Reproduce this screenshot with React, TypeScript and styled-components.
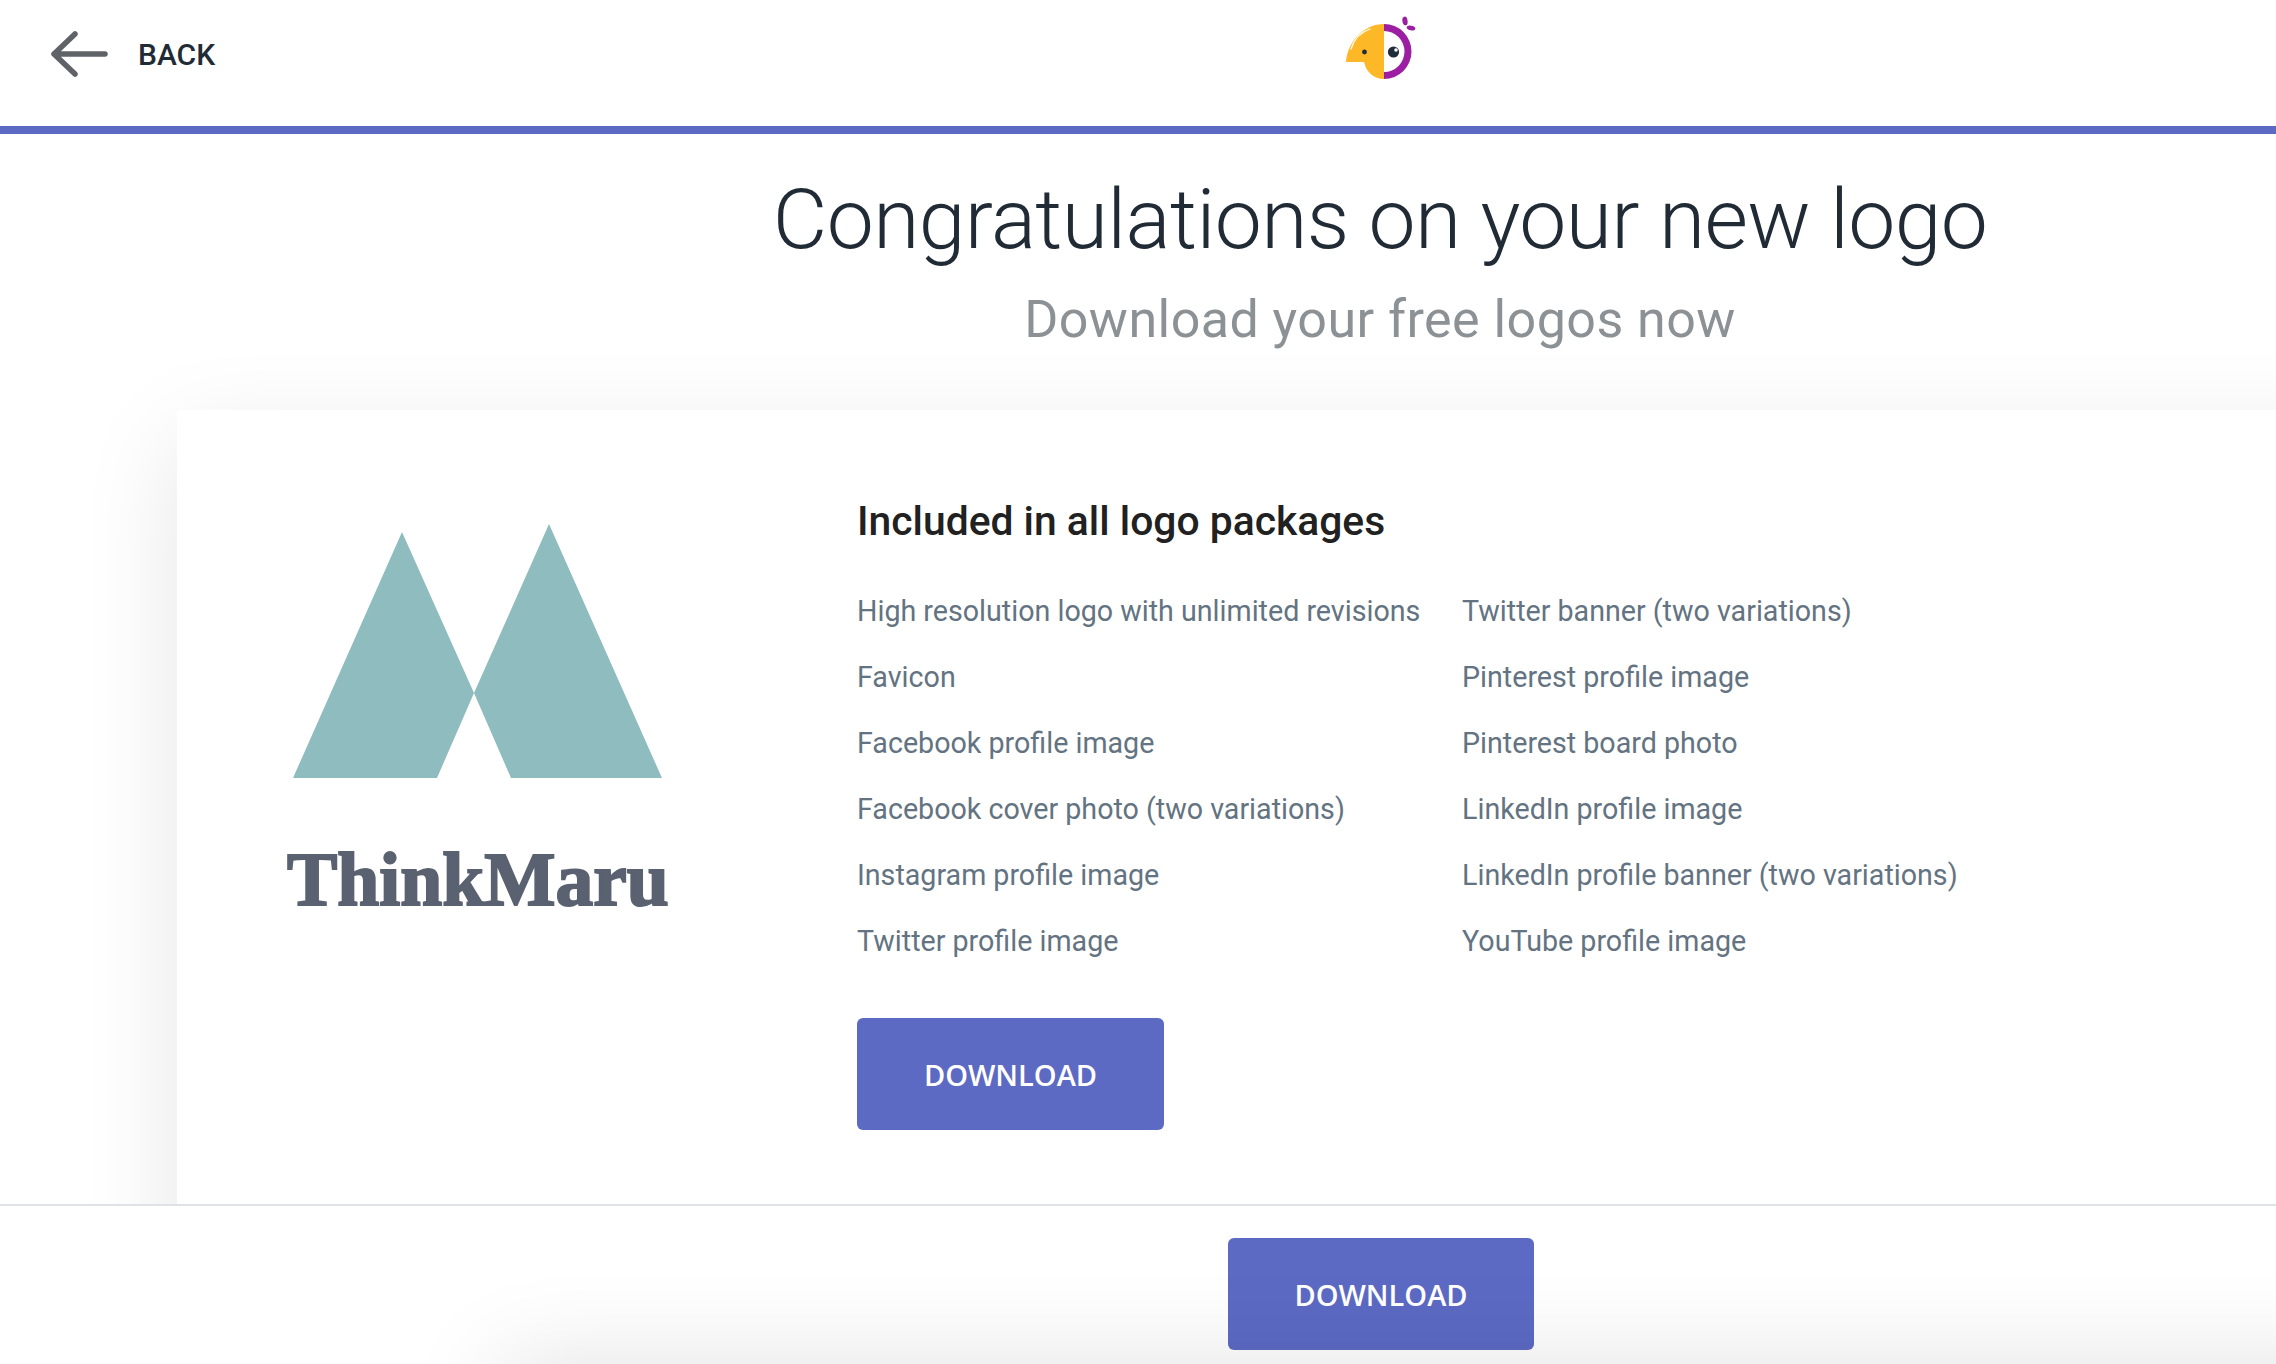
import React from 'react';
import styled, { createGlobalStyle } from 'styled-components';

const PRIMARY = '#5c6ac4';

const leftFeatures = [
  'High resolution logo with unlimited revisions',
  'Favicon',
  'Facebook profile image',
  'Facebook cover photo (two variations)',
  'Instagram profile image',
  'Twitter profile image',
];

const rightFeatures = [
  'Twitter banner (two variations)',
  'Pinterest profile image',
  'Pinterest board photo',
  'LinkedIn profile image',
  'LinkedIn profile banner (two variations)',
  'YouTube profile image',
];

const GlobalStyle = createGlobalStyle`
  html, body {
    margin: 0;
    height: 1364px;
    overflow: hidden;
    background: #fff;
  }
  body {
    font-family: Roboto, "Liberation Sans", sans-serif;
  }
`;

const Page = styled.div`
  position: relative;
  width: 2276px;
  height: 1364px;
  overflow: hidden;
  background: #fff;
`;

const Header = styled.header`
  display: flex;
  align-items: flex-start;
  height: 126px;
  border-bottom: 8px solid ${PRIMARY};
`;

const BackLink = styled.a`
  display: flex;
  align-items: center;
  gap: 28px;
  width: 213px;
  height: 108px;
  padding-left: 50px;
  box-sizing: content-box;
  font-size: 30px;
  font-weight: 500;
  color: #212b36;
`;

const BrandMark = styled.svg`
  margin-left: 1057px;
  width: 120px;
  height: 90px;
  flex: none;
`;

const Main = styled.main`
  height: 1070px;
  overflow: hidden;
`;

const Hero = styled.div`
  height: 276px;
  padding: 36px 0 0 484px;
  box-sizing: border-box;
  text-align: center;
`;

const Title = styled.h1`
  margin: 0;
  font-size: 84px;
  line-height: 100px;
  font-weight: 300;
  letter-spacing: -0.6px;
  color: #212b36;
`;

const Subtitle = styled.p`
  margin: 20px 0 0;
  font-size: 52px;
  line-height: 60px;
  font-weight: 400;
  letter-spacing: 0.45px;
  color: #8c9196;
`;

const Card = styled.section`
  display: flex;
  width: 2300px;
  height: 900px;
  margin-left: 177px;
  background: #fff;
  border-radius: 4px;
  box-shadow: 0 30px 100px rgba(0, 0, 0, 0.1);
`;

const LogoColumn = styled.div`
  width: 680px;
  flex: none;
  padding: 114px 0 0 110px;
  box-sizing: border-box;
`;

const LogoShape = styled.svg`
  display: block;
  width: 400px;
  height: 270px;
  margin-left: 6px;
`;

const LogoName = styled.div`
  margin-top: 47px;
  font-family: "Liberation Serif", serif;
  font-size: 75.5px;
  line-height: 78px;
  font-weight: 700;
  color: #5a6170;
  -webkit-text-stroke: 2px #5a6170;
`;

const Details = styled.div`
  padding-top: 88px;
`;

const DetailsTitle = styled.h2`
  margin: 0 0 34px;
  font-size: 40.8px;
  line-height: 46px;
  font-weight: 500;
  color: #212121;
`;

const FeatureGrid = styled.div`
  display: grid;
  grid-template-columns: 605px auto;
  width: 1200px;
`;

const FeatureList = styled.ul`
  margin: 0;
  padding: 0;
  list-style: none;
`;

const FeatureItem = styled.li`
  height: 66px;
  font-size: 28.65px;
  line-height: 66px;
  color: #637381;
  white-space: nowrap;
`;

const DownloadButton = styled.button`
  display: block;
  width: 306px;
  height: 112px;
  padding: 0;
  border: 0;
  border-radius: 6px;
  background: ${PRIMARY};
  color: #fff;
  font-family: "Open Sans", sans-serif;
  font-size: 29px;
  font-weight: 600;
`;

const CardButton = styled(DownloadButton)`
  width: 307px;
  margin-top: 44px;
`;

const Footer = styled.footer`
  display: flex;
  justify-content: center;
  height: 158px;
  padding: 32px 0 0 486px;
  box-sizing: border-box;
  border-top: 2px solid #dfe3e8;
  background: #fff;
`;

// shadow of the next card, sitting just under the fold
const NextCardShadow = styled.div`
  position: absolute;
  left: 500px;
  top: 1364px;
  width: 2200px;
  height: 400px;
  border-radius: 4px;
  box-shadow: 0 0 100px rgba(0, 0, 0, 0.12);
`;

const ParrotLogo = () => (
  <BrandMark viewBox="0 0 120 90" aria-label="logo">
    <path d="M64 24 C45 24 28 40 26 62 L44 62 C46 72 54 79 64 79 Z" fill="#fdb827" />
    <path d="M31 49 C34 39 41 32 50 29" fill="none" stroke="#fff" strokeWidth="1.2" strokeLinecap="round" />
    <path d="M64 24 A27.5 27.5 0 0 1 64 79 L64 72 A20.5 20.5 0 0 0 64 31 Z" fill="#9c1ea2" />
    <circle cx="44.5" cy="52" r="2.4" fill="#1f2d3a" />
    <circle cx="73.5" cy="52" r="5.6" fill="#1f2d3a" />
    <circle cx="76" cy="50" r="1.8" fill="#fff" />
    <ellipse cx="85" cy="21" rx="2.6" ry="4.4" fill="#9c1ea2" transform="rotate(-8 85 21)" />
    <ellipse cx="91" cy="28" rx="4.4" ry="2.4" fill="#9c1ea2" transform="rotate(12 91 28)" />
  </BrandMark>
);

export default function App() {
  return (
    <Page>
      <GlobalStyle />
      <Header>
        <BackLink>
          <svg width="60" height="48" viewBox="0 0 60 48" fill="none" stroke="#5f6368" strokeWidth="5.5" strokeLinecap="round" strokeLinejoin="round">
            <path d="M55 24H4M25 4 4 24l21 20" />
          </svg>
          BACK
        </BackLink>
        <ParrotLogo />
      </Header>
      <Main>
        <Hero>
          <Title>Congratulations on your new logo</Title>
          <Subtitle>Download your free logos now</Subtitle>
        </Hero>
        <Card>
          <LogoColumn>
            <LogoShape viewBox="293 524 400 270">
              <path d="M402 532 474 693 437 778H293ZM549 524 662 778H511L474 693Z" fill="#8fbcbe" />
            </LogoShape>
            <LogoName>ThinkMaru</LogoName>
          </LogoColumn>
          <Details>
            <DetailsTitle>Included in all logo packages</DetailsTitle>
            <FeatureGrid>
              <FeatureList>
                {leftFeatures.map((item) => (
                  <FeatureItem key={item}>{item}</FeatureItem>
                ))}
              </FeatureList>
              <FeatureList>
                {rightFeatures.map((item) => (
                  <FeatureItem key={item}>{item}</FeatureItem>
                ))}
              </FeatureList>
            </FeatureGrid>
            <CardButton type="button">DOWNLOAD</CardButton>
          </Details>
        </Card>
      </Main>
      <Footer>
        <DownloadButton type="button">DOWNLOAD</DownloadButton>
      </Footer>
      <NextCardShadow />
    </Page>
  );
}
